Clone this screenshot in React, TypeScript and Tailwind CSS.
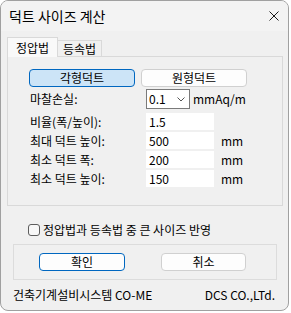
import React, { useState } from 'react'

const font = { fontFamily: '"Noto Sans CJK KR", "Noto Sans", sans-serif' }

interface RowProps {
  label: string;
  value: string;
  unit?: string;
}

const InputRow: React.FC<RowProps> = ({ label, value, unit }) => (
  <div className="flex items-center h-[19px]">
    <span className="w-[117px] pl-[1px] text-[12px] leading-none">{label}</span>
    <div className="w-[68px] h-[17px] bg-white flex items-center pl-[3px] text-[12px] leading-none">{value}</div>
    {unit && <span className="ml-[7px] text-[12px] leading-none">{unit}</span>}
  </div>
)

export default function App() {
  const [shape, setShape] = useState<'rect' | 'round'>('rect')
  const [tab, setTab] = useState(0)
  const [checked, setChecked] = useState(false)

  return (
    <div className="w-[291px] h-[313px] bg-white text-[#000]" style={font}>
      <div className="w-[289px] h-[311px] rounded-[8px] border border-[#a0a0a0] bg-[#f0f0f0] overflow-hidden flex flex-col">
        {/* title bar */}
        <div className="h-[30px] bg-[#f3f3f3] flex items-center justify-between pl-[8px] pr-[9px] shrink-0">
          <span className="text-[14px] leading-none">덕트 사이즈 계산</span>
          <svg width="10" height="10" viewBox="0 0 10 10">
            <path d="M0.5 0.5 L9.5 9.5 M9.5 0.5 L0.5 9.5" stroke="#1a1a1a" strokeWidth="1" />
          </svg>
        </div>

        {/* tabs */}
        <div className="flex items-end ml-[6px] mt-[6px] h-[20px]">
          <button
            onClick={() => setTab(0)}
            className={`w-[51px] border border-[#d9d9d9] border-b-0 text-[12px] leading-none flex items-center justify-center ${tab === 0 ? 'h-[20px] bg-[#f9f9f9] relative z-10' : 'h-[17px]'}`}
          >
            정압법
          </button>
          <button
            onClick={() => setTab(1)}
            className={`w-[44px] border border-[#d9d9d9] border-l-0 border-b-0 text-[12px] leading-none flex items-center justify-center ${tab === 1 ? 'h-[20px] bg-[#f9f9f9]' : 'h-[17px]'}`}
          >
            등속법
          </button>
        </div>

        {/* tab panel */}
        <div className="ml-[6px] w-[276px] h-[150px] border border-[#d9d9d9] -mt-px shrink-0 pl-[21px] pt-[12px]">
          <div className="flex gap-[6px]">
            <button
              onClick={() => setShape('rect')}
              className={`w-[106px] h-[18px] rounded-[4px] border text-[12px] leading-none ${shape === 'rect' ? 'bg-[#cce4f7] border-[#0067c0]' : 'bg-[#fdfdfd] border-[#d0d0d0]'}`}
            >
              각형덕트
            </button>
            <button
              onClick={() => setShape('round')}
              className={`w-[106px] h-[18px] rounded-[4px] border text-[12px] leading-none ${shape === 'round' ? 'bg-[#cce4f7] border-[#0067c0]' : 'bg-[#fdfdfd] border-[#d0d0d0]'}`}
            >
              원형덕트
            </button>
          </div>

          <div className="flex items-center h-[20px] mt-[2px]">
            <span className="w-[117px] pl-[1px] text-[12px] leading-none">마찰손실:</span>
            <div className="w-[44px] h-[20px] bg-white border border-[#7a7a7a] flex items-center justify-between pl-[2px] pr-[4px] text-[12px] leading-none">
              <span>0.1</span>
              <svg width="8" height="5" viewBox="0 0 8 5">
                <path d="M0.5 0.5 L4 4 L7.5 0.5" stroke="#555" fill="none" strokeWidth="1" />
              </svg>
            </div>
            <span className="ml-[3px] text-[12px] leading-none">mmAq/m</span>
          </div>

          <div className="mt-[3px] flex flex-col">
            <InputRow label="비율(폭/높이):" value="1.5" />
            <InputRow label="최대 덕트 높이:" value="500" unit="mm" />
            <InputRow label="최소 덕트 폭:" value="200" unit="mm" />
            <InputRow label="최소 덕트 높이:" value="150" unit="mm" />
          </div>
        </div>

        {/* checkbox */}
        <label className="flex items-center ml-[27px] mt-[18px] h-[12px] cursor-pointer">
          <span
            onClick={() => setChecked(!checked)}
            className={`w-[12px] h-[12px] rounded-[3px] border border-[#5c5c5c] ${checked ? 'bg-[#0067c0]' : 'bg-[#f7f7f7]'}`}
          />
          <span className="ml-[3px] text-[12px] leading-none">정압법과 등속법 중 큰 사이즈 반영</span>
        </label>

        {/* button group */}
        <div className="ml-[12px] mt-[8px] w-[264px] h-[36px] border border-[#dcdcdc] flex items-center pl-[25px] gap-[36px]">
          <button className="w-[86px] h-[18px] rounded-[4px] border border-[#0067c0] bg-[#fdfdfd] text-[12px] leading-none">확인</button>
          <button className="w-[85px] h-[18px] rounded-[4px] border border-[#d0d0d0] bg-[#fdfdfd] text-[12px] leading-none">취소</button>
        </div>

        {/* footer */}
        <div className="flex justify-between items-center ml-[12px] mr-[13px] mt-[8px] h-[14px] text-[12px] leading-none">
          <span>건축기계설비시스템 CO-ME</span>
          <span>DCS CO.,LTd.</span>
        </div>
      </div>
    </div>
  )
}
